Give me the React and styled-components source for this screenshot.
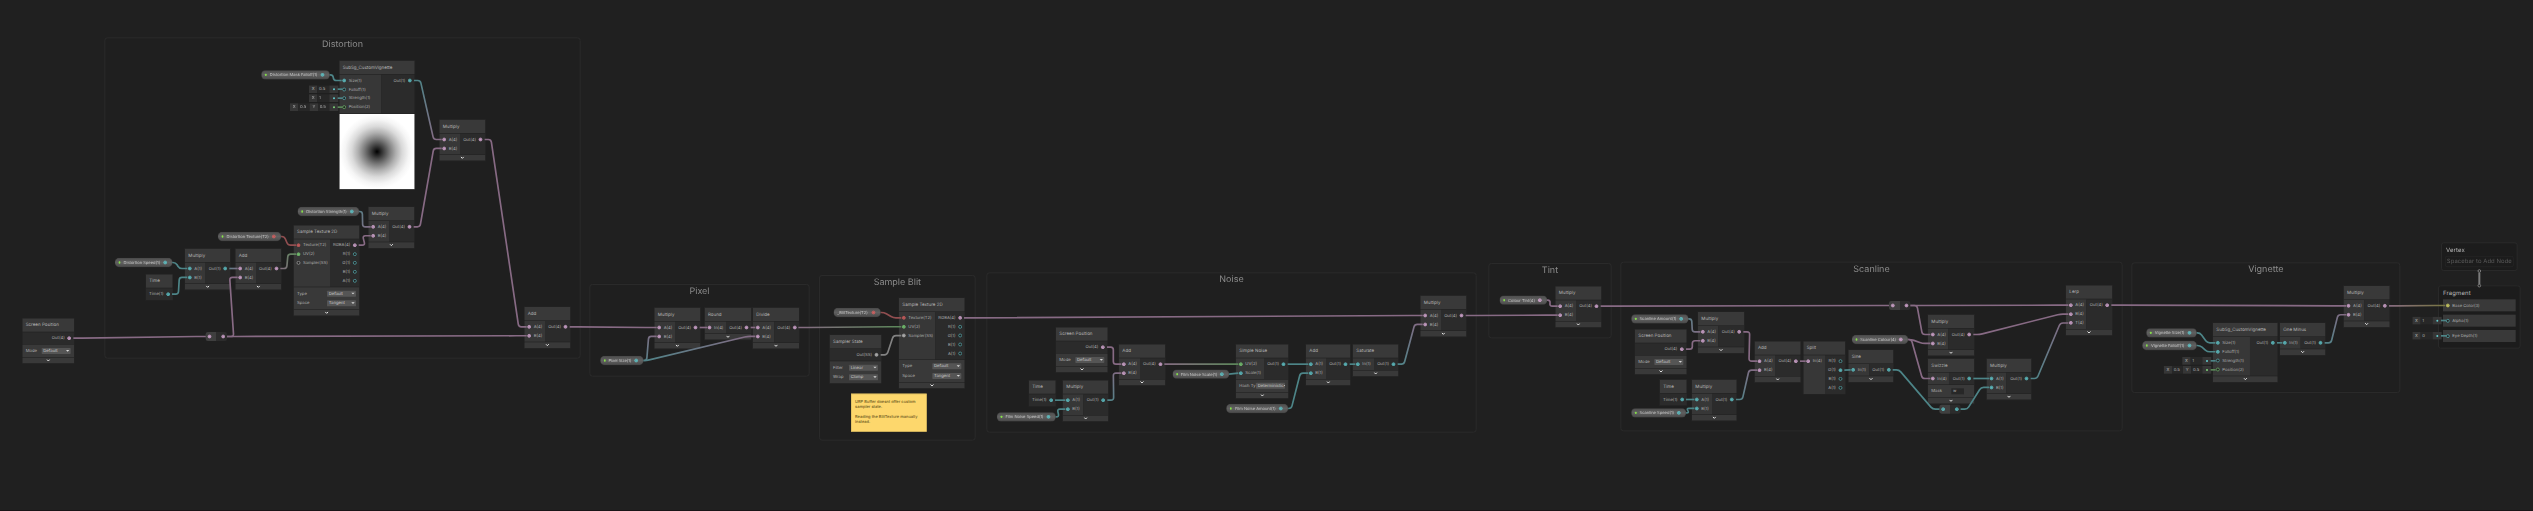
import React from 'react';
import styled, { createGlobalStyle, css } from 'styled-components';

const Global = createGlobalStyle`
  html, body, #root { margin: 0; padding: 0; height: 100%; }
  body {
    background: #202020;
    overflow: hidden;
    font-family: Inter, "Liberation Sans", sans-serif;
    text-rendering: geometricPrecision;
  }
  *, *::before, *::after { box-sizing: border-box; }
`;

const PORT = {
  teal: '#63cdd1',
  pink: '#e2b2e0',
  green: '#7fd67a',
  red: '#e06464',
  gray: '#c4c4c4',
  yellow: '#dede6a',
};
const WIRE = {
  teal: '#4d8588',
  pink: '#876a84',
  green: '#5a8858',
  red: '#914e50',
  gray: '#828282',
  yellow: '#77773f',
};

/* The graph is authored at 3x and shown zoomed out. */
const Viewport = styled.main`
  position: relative;
  width: 2533px;
  height: 511px;
  overflow: hidden;
  background: #202020;
  border-bottom: 1px solid #191416;
`;
const Canvas = styled.div`
  position: relative;
  width: 7599px;
  height: 1530px;
  transform: scale(0.333333);
  transform-origin: 0 0;
`;
const placed = css`
  position: absolute;
  left: ${(p) => p.$x}px;
  top: ${(p) => p.$y}px;
  width: ${(p) => p.$w}px;
`;

const GroupFrame = styled.section`
  ${placed}
  height: ${(p) => p.$h}px;
  border: 3px solid #2b2b2b;
  border-radius: 9px;
  background: #1f1f1f;
  padding-top: ${(p) => p.$pad}px;
  text-align: center;
`;
const GroupTitle = styled.h2`
  margin: 0;
  font-size: 27px;
  line-height: 32px;
  font-weight: 400;
  color: #8b8b8b;
`;

const NodeBox = styled.article`
  ${placed}
  display: flex;
  flex-direction: column;
  gap: 2px;
  background: #232323;
  outline: 2px solid #262626;
`;
const NodeHeader = styled.header`
  height: 40px;
  padding-left: 10px;
  display: flex;
  align-items: center;
  background: #393939;
  color: #b4b4b4;
  font-size: 13.5px;
  white-space: nowrap;
`;
const Ports = styled.div`
  display: flex;
`;
const Column = styled.div`
  display: flex;
  flex-direction: column;
  padding: 4px 9px 4.4px;
  ${(p) =>
    p.$side === 'in'
      ? css`width: ${p.$w}px; flex: none; background: #373737;`
      : css`flex: 1; align-items: flex-end; background: #2b2b2b;`}
`;
const PortRow = styled.div`
  height: 26.8px;
  display: flex;
  align-items: center;
  gap: 8px;
  white-space: nowrap;
  font-size: 12.6px;
  color: #b0b0b0;
`;
const Dot = styled.i`
  flex: none;
  width: 11px;
  height: 11px;
  border-radius: 50%;
  border: 2px solid ${(p) => PORT[p.$c]};
  opacity: 0.85;
  background: ${(p) => (p.$open ? '#1d1d1d' : PORT[p.$c])};
  box-shadow: ${(p) => (p.$open ? 'none' : 'inset 0 0 0 1px rgba(30,30,30,.35)')};
`;
const Controls = styled.div`
  background: #393939;
  padding: 4px 10px;
`;
const ControlRow = styled.div`
  height: 29px;
  display: flex;
  align-items: center;
  justify-content: space-between;
  white-space: nowrap;
  font-size: 12.6px;
  color: #b4b4b4;
`;
const Dropdown = styled.span`
  width: 87px;
  height: 18px;
  padding: 0 4px 0 5px;
  display: flex;
  align-items: center;
  justify-content: space-between;
  border-radius: 2px;
  background: #555555;
  color: #d0d0d0;
  overflow: hidden;
`;
const Caret = styled.i`
  flex: none;
  border: 5px solid transparent;
  border-top-color: #d8d8d8;
  border-bottom: 0;
`;
const MaskField = styled.span`
  width: 38px;
  height: 18px;
  margin-right: 20px;
  padding-left: 5px;
  line-height: 17px;
  background: #272727;
`;
const Footer = styled.footer`
  height: 17px;
  display: flex;
  align-items: center;
  justify-content: center;
  background: #393939;
`;
const Preview = styled.div`
  height: 226px;
  background: radial-gradient(circle, #000 0, #1c1c1c 8px, #434343 20px, #7b7b7b 38px, #b0b0b0 57px, #dadada 76px, #f5f5f5 96px, #fff 112px);
`;

const Pill = styled.div`
  ${placed}
  height: 29px;
  padding: 0 16px 0 11px;
  display: flex;
  align-items: center;
  justify-content: space-between;
  border-radius: 15px;
  border: 1px solid #3a3a3a;
  background: linear-gradient(#4d4d4d, #606060 50%, #494949);
  color: #c4c4c4;
  font-size: 12.2px;
  white-space: nowrap;
`;
const Exposed = styled.i`
  width: 5px;
  height: 7px;
  border-radius: 2px;
  background: #86e04a;
`;
const RedirectBox = styled.div`
  ${placed}
  height: 27px;
  padding: 0 6px;
  display: flex;
  align-items: center;
  justify-content: space-between;
  border-radius: 7px;
  background: linear-gradient(90deg, #3f3f3f 50%, #2c2c2c 50%);
`;

const InlineValue = styled.div`
  ${placed}
  height: 23px;
  display: flex;
  font-size: 12.6px;
  line-height: 23px;
  text-align: center;
  color: #b8b8b8;
`;
const AxisLabel = styled.span`
  width: 25px;
  background: #363636;
`;
const AxisValue = styled.span`
  flex: 1;
  padding-left: 5px;
  text-align: left;
  background: #272727;
`;
const Plug = styled.span`
  width: 27px;
  display: flex;
  align-items: center;
  justify-content: center;
  background: #363636;
  &::after {
    content: '';
    width: 6px;
    height: 6px;
    border-radius: 50%;
    background: ${(p) => PORT[p.$c]};
  }
`;

const Note = styled.aside`
  ${placed}
  height: 114px;
  padding: 15px 10px;
  background: #fdd76c;
  border: 2px solid #d9b95f;
  color: #6d5a22;
  font-size: 12px;
  font-weight: 500;
  line-height: 15px;
  white-space: pre;
`;

const Stack = styled.section`
  ${placed}
  height: ${(p) => p.$h}px;
  border: 3px solid #2a2a2a;
  border-radius: 8px;
  background: #1c1c1c;
  padding: 8px 12px;
  display: flex;
  flex-direction: column;
`;
const StackTitle = styled.h3`
  margin: 0;
  font-size: 18px;
  line-height: 23px;
  font-weight: 400;
  letter-spacing: 0.3px;
  color: #b8b8b8;
`;
const Hint = styled.div`
  width: 206px;
  height: 33px;
  margin: 7px 0 0 -3px;
  border: 2px solid #272727;
  border-radius: 6px;
  line-height: 28px;
  text-align: center;
  white-space: nowrap;
  font-size: 17.8px;
  letter-spacing: 0.2px;
  color: #5a5a5a;
`;
const Block = styled.div`
  width: 218px;
  height: 36px;
  margin-bottom: 10px;
  padding-left: 9px;
  display: flex;
  align-items: center;
  gap: 8px;
  background: #393939;
  font-size: 12.6px;
  color: #b4b4b4;
`;
const BlockList = styled.div`
  margin-top: 8px;
`;
const Wires = styled.svg`
  position: absolute;
  inset: 0;
  pointer-events: none;
`;

const p = (label, c, open) => ({ label, c, open });
const ab = (n, c) => [p(`A(${n})`, c), p(`B(${n})`, c)];
const out = (n, c) => [p(`Out(${n})`, c)];
const rgba = (names) => names.map((n) => p(`${n}(1)`, 'teal', true));
const math = (title, x, y, w, inW, n, c) => ({ title, x, y, w, inW, ins: ab(n, c), outs: out(n, c) });
const screenPos = (x, y) => ({
  title: 'Screen Position', x, y, w: 155, outs: out(4, 'pink'), controls: [['Mode', 'Default']],
});
const time = (x, y) => ({ title: 'Time', x, y, w: 80, outs: [p('Time(1)', 'teal')], flat: true });
const texture = (x, y) => ({
  title: 'Sample Texture 2D', x, y, w: 197, inW: 109,
  outs: [p('RGBA(4)', 'pink'), ...rgba(['R', 'G', 'B', 'A'])],
  controls: [['Type', 'Default'], ['Space', 'Tangent']],
});

const NODES = {
  pos1: screenPos(67, 955),
  time1: time(438, 823),
  mulA: math('Multiply', 555, 746, 135, 60, 1, 'teal'),
  addA: math('Add', 706, 746, 137, 62, 4, 'pink'),
  tex1: { ...texture(881, 676), ins: [p('Texture(T2)', 'red'), p('UV(2)', 'green'), p('Sampler(SS)', 'gray', true)] },
  mulB: math('Multiply', 1105, 621, 138, 62, 4, 'pink'),
  vigA: {
    title: 'SubSg_CustomVignette', x: 1018, y: 182, w: 226, inW: 126, preview: true, flat: true,
    ins: [p('Size(1)', 'teal'), p('Falloff(1)', 'teal', true), p('Strength(1)', 'teal', true), p('Position(2)', 'green', true)],
    outs: out(1, 'teal'),
  },
  mulC: math('Multiply', 1318, 359, 138, 62, 4, 'pink'),
  addB: math('Add', 1573, 921, 138, 62, 4, 'pink'),
  mulD: math('Multiply', 1963, 923, 138, 62, 4, 'pink'),
  round: { title: 'Round', x: 2114, y: 923, w: 140, inW: 64, ins: [p('In(4)', 'pink')], outs: out(4, 'pink') },
  divide: math('Divide', 2259, 923, 138, 64, 4, 'pink'),
  sampler: {
    title: 'Sampler State', x: 2489, y: 1005, w: 155, flat: true, outs: [p('Out(SS)', 'gray')],
    controls: [['Filter', 'Linear'], ['Wrap', 'Clamp']],
  },
  tex2: { ...texture(2697, 894), ins: [p('Texture(T2)', 'red'), p('UV(2)', 'green'), p('Sampler(SS)', 'gray')] },
  pos2: screenPos(3168, 982),
  time2: time(3087, 1141),
  mulE: math('Multiply', 3189, 1141, 135, 61, 1, 'teal'),
  addC: math('Add', 3357, 1033, 138, 63, 4, 'pink'),
  noise: {
    title: 'Simple Noise', x: 3708, y: 1033, w: 157, inW: 84,
    ins: [p('UV(2)', 'green'), p('Scale(1)', 'teal')], outs: out(1, 'teal'), controls: [['Hash Ty', 'Deterministic']],
  },
  addD: math('Add', 3918, 1033, 133, 60, 1, 'teal'),
  sat: { title: 'Saturate', x: 4059, y: 1033, w: 136, inW: 63, ins: [p('In(1)', 'teal')], outs: out(1, 'teal') },
  mulF: math('Multiply', 4261, 887, 138, 62, 4, 'pink'),
  mulG: math('Multiply', 4666, 859, 138, 62, 4, 'pink'),
  pos3: screenPos(4905, 988),
  time3: time(4980, 1139),
  mulH: math('Multiply', 5076, 1139, 134, 60, 1, 'teal'),
  mulI: math('Multiply', 5094, 936, 138, 61, 4, 'pink'),
  addE: math('Add', 5264, 1024, 138, 61, 4, 'pink'),
  split: {
    title: 'Split', x: 5410, y: 1024, w: 125, inW: 65, flat: true, ins: [p('In(4)', 'pink')],
    outs: [p('R(1)', 'teal', true), p('G(1)', 'teal'), p('B(1)', 'teal', true), p('A(1)', 'teal', true)],
  },
  sine: { title: 'Sine', x: 5545, y: 1050, w: 135, inW: 63, ins: [p('In(1)', 'teal')], outs: out(1, 'teal') },
  mulJ: math('Multiply', 5784, 944, 138, 61, 4, 'pink'),
  swizzle: {
    title: 'Swizzle', x: 5784, y: 1076, w: 138, inW: 63, ins: [p('In(4)', 'pink')], outs: out(1, 'teal'), mask: 'w',
  },
  mulK: math('Multiply', 5960, 1076, 134, 59, 1, 'teal'),
  lerp: {
    title: 'Lerp', x: 6198, y: 856, w: 138, inW: 61,
    ins: [p('A(4)', 'pink'), p('B(4)', 'pink'), p('T(4)', 'pink')], outs: out(4, 'pink'),
  },
  vigB: {
    title: 'SubSg_CustomVignette', x: 6639, y: 969, w: 194, inW: 111,
    ins: [p('Size(1)', 'teal'), p('Falloff(1)', 'teal'), p('Strength(1)', 'teal', true), p('Position(2)', 'green', true)],
    outs: out(1, 'teal'),
  },
  oneMinus: { title: 'One Minus', x: 6840, y: 969, w: 136, inW: 62, ins: [p('In(1)', 'teal')], outs: out(1, 'teal') },
  mulL: math('Multiply', 7031, 858, 138, 62, 4, 'pink'),
};

const PILLS = {
  maskFalloff: ['Distortion Mask Falloff(1)', 783, 210, 207, 'teal'],
  strength: ['Distortion Strength(1)', 892, 620, 186, 'teal'],
  distTex: ['Distortion Texture(T2)', 653, 695, 191, 'red'],
  distSpeed: ['Distortion Speed(1)', 344, 773, 174, 'teal'],
  pixel: ['Pixel Size(1)', 1800, 1067, 131, 'teal'],
  blit: ['_BlitTexture(T2)', 2500, 923, 143, 'red', true],
  filmSpeed: ['Film Noise Speed(1)', 2990, 1236, 178, 'teal'],
  filmScale: ['Film Noise Scale(1)', 3517, 1108, 171, 'teal'],
  filmAmount: ['Film Noise Amount(1)', 3678, 1211, 187, 'teal'],
  tint: ['Colour Tint(4)', 4498, 886, 144, 'pink'],
  scanAmount: ['Scanline Amount(1)', 4893, 942, 173, 'teal'],
  scanSpeed: ['Scanline Speed(1)', 4893, 1224, 166, 'teal'],
  scanColour: ['Scanline Colour(4)', 5555, 1004, 170, 'pink'],
  vigSize: ['Vignette Size(1)', 6438, 984, 153, 'teal'],
  vigFalloff: ['Vignette Falloff(1)', 6426, 1022, 165, 'teal'],
};

const REDIRECTS = {
  rA: [617, 996, 64, 'pink'],
  rB: [5667, 903, 64, 'pink'],
  rC: [5818, 1214, 64, 'teal'],
};

const GROUPS = [
  ['Distortion', 313, 112, 1429, 964, 0],
  ['Pixel', 1768, 852, 661, 278, 2],
  ['Sample Blit', 2457, 825, 470, 497, 1],
  ['Noise', 2959, 817, 1471, 481, 1],
  ['Tint', 4465, 789, 370, 226, 1],
  ['Scanline', 4861, 785, 1507, 509, 2],
  ['Vignette', 6394, 787, 807, 392, 1],
];

const VALUES = [
  [927, 256, 88, [['X', '0.5']], 'teal'],
  [927, 283, 88, [['X', '1']], 'teal'],
  [870, 310, 145, [['X', '0.5'], ['Y', '0.5']], 'green'],
  [6547, 1071, 87, [['X', '1']], 'teal'],
  [6491, 1098, 143, [['X', '0.5'], ['Y', '0.5']], 'green'],
  [7237, 950, 88, [['X', '1']], 'teal'],
  [7237, 996, 88, [['X', '0']], 'teal'],
];

const EDGES = [
  ['pos1', 'rA'], ['rA', 'addA:1'], ['rA', 'addB:1'], ['distSpeed', 'mulA:0'], ['time1', 'mulA:1'],
  ['mulA', 'addA:0'], ['addA', 'tex1:1'], ['distTex', 'tex1:0'], ['tex1', 'mulB:1'], ['strength', 'mulB:0'],
  ['mulB', 'mulC:1'], ['maskFalloff', 'vigA:0'], ['vigA', 'mulC:0'], ['mulC', 'addB:0'], ['addB', 'mulD:0'],
  ['pixel', 'mulD:1'], ['pixel', 'divide:1'], ['mulD', 'round:0'], ['round', 'divide:0'], ['divide', 'tex2:1'],
  ['blit', 'tex2:0'], ['sampler', 'tex2:2'], ['tex2', 'mulF:0'], ['pos2', 'addC:0'], ['time2', 'mulE:0'],
  ['filmSpeed', 'mulE:1'], ['mulE', 'addC:1'], ['addC', 'noise:0'], ['filmScale', 'noise:1'], ['noise', 'addD:0'],
  ['filmAmount', 'addD:1'], ['addD', 'sat:0'], ['sat', 'mulF:1'], ['mulF', 'mulG:1'], ['tint', 'mulG:0'],
  ['mulG', 'rB'], ['scanAmount', 'mulI:0'], ['pos3', 'mulI:1'], ['time3', 'mulH:0'], ['scanSpeed', 'mulH:1'],
  ['mulI', 'addE:0'], ['mulH', 'addE:1'], ['addE', 'split:0'], ['split:1', 'sine:0'], ['sine', 'rC'],
  ['rB', 'mulJ:0'], ['rB', 'lerp:0'], ['scanColour', 'mulJ:1'], ['scanColour', 'swizzle:0'], ['mulJ', 'lerp:1'],
  ['swizzle', 'mulK:0'], ['rC', 'mulK:1'], ['mulK', 'lerp:2'], ['lerp', 'mulL:0'], ['vigSize', 'vigB:0'],
  ['vigFalloff', 'vigB:1'], ['vigB', 'oneMinus:0'], ['oneMinus', 'mulL:1'], ['mulL', 'base'],
];

function anchor(ref, isOut) {
  const [id, idx] = ref.split(':');
  const i = Number(idx || 0);
  if (id === 'base') return { x: 7343, y: 916.5, c: 'yellow', trim: 8 };
  if (PILLS[id]) {
    const [, x, y, w, c] = PILLS[id];
    return { x: x + w - 22, y: y + 14.5, c, trim: 20 };
  }
  if (REDIRECTS[id]) {
    const [x, y, w, c] = REDIRECTS[id];
    return { x: isOut ? x + w - 11 : x + 11, y: y + 13.5, c, trim: 8 };
  }
  const n = NODES[id];
  const port = (isOut ? n.outs : n.ins)[i];
  return { x: isOut ? n.x + n.w - 14 : n.x + 14, y: n.y + 59.5 + 26.8 * i, c: port.c, trim: isOut ? 12 : 7 };
}

function wirePath(a, b) {
  const start = a.x + a.trim;
  const end = b.x - b.trim;
  if (b.x - a.x < 62 && Math.abs(b.y - a.y) < 4) return `M${start} ${a.y}L${end} ${b.y}`;
  const k1 = a.x + 31;
  const k2 = b.x - 31;
  const len = Math.hypot(k2 - k1, b.y - a.y) || 1;
  const r = Math.min(8, len / 2);
  const ux = ((k2 - k1) / len) * r;
  const uy = ((b.y - a.y) / len) * r;
  return `M${start} ${a.y}L${Math.max(start, k1 - r)} ${a.y}Q${k1} ${a.y} ${k1 + ux} ${a.y + uy}L${k2 - ux} ${b.y - uy}Q${k2} ${b.y} ${Math.min(end, k2 + r)} ${b.y}L${end} ${b.y}`;
}

function WireLayer() {
  const wires = EDGES.map(([from, to]) => [anchor(from, true), anchor(to, false)]);
  const stubs = VALUES.map(([x, y, w, , c]) => ({ x: x + w, y: y + 11.5, c }));
  return (
    <Wires width="7599" height="1530" fill="none">
      <defs>
        {wires.map(([a, b], i) => (
          <linearGradient key={i} id={`w${i}`} gradientUnits="userSpaceOnUse" x1={a.x} y1={a.y} x2={b.x} y2={b.y}>
            <stop offset="0" stopColor={WIRE[a.c]} />
            <stop offset="1" stopColor={WIRE[b.c]} />
          </linearGradient>
        ))}
      </defs>
      {wires.map(([a, b], i) => (
        <path key={i} d={wirePath(a, b)} stroke={`url(#w${i})`} strokeWidth="5" />
      ))}
      {stubs.map((s, i) => (
        <path key={i} d={`M${s.x - 2} ${s.y}H${s.x + 13}`} stroke={WIRE[s.c]} strokeWidth="5" />
      ))}
      <path d="M7438 818V853" stroke="#7c7c7c" strokeWidth="6" />
      <circle cx="7438" cy="813" r="4" stroke="#a0a0a0" strokeWidth="2" fill="#202020" />
      <circle cx="7438" cy="857" r="4" stroke="#a0a0a0" strokeWidth="2" fill="#202020" />
    </Wires>
  );
}

const Chevron = () => (
  <svg width="12" height="9" viewBox="0 0 12 9" fill="none" stroke="#f2f2f2" strokeWidth="2.8">
    <path d="M1.5 1.5L6 6L10.5 1.5" />
  </svg>
);

function GraphNode({ node }) {
  const { title, x, y, w, inW, ins, outs, controls, mask, preview, flat } = node;
  return (
    <NodeBox $x={x} $y={y} $w={w}>
      <NodeHeader>{title}</NodeHeader>
      <Ports>
        {ins && (
          <Column $side="in" $w={inW}>
            {ins.map((q) => (
              <PortRow key={q.label}><Dot $c={q.c} $open={q.open} />{q.label}</PortRow>
            ))}
          </Column>
        )}
        <Column $side="out">
          {outs.map((q) => (
            <PortRow key={q.label}>{q.label}<Dot $c={q.c} $open={q.open} /></PortRow>
          ))}
        </Column>
      </Ports>
      {controls && (
        <Controls>
          {controls.map(([label, value]) => (
            <ControlRow key={label}>
              {label}
              <Dropdown>{value}<Caret /></Dropdown>
            </ControlRow>
          ))}
        </Controls>
      )}
      {mask && <Controls><ControlRow>Mask<MaskField>{mask}</MaskField></ControlRow></Controls>}
      {preview && <Preview />}
      {!flat && <Footer><Chevron /></Footer>}
    </NodeBox>
  );
}

export default function App() {
  return (
    <>
      <Global />
      <Viewport>
        <Canvas>
          {GROUPS.map(([title, x, y, w, h, pad]) => (
            <GroupFrame key={title} $x={x} $y={y} $w={w} $h={h} $pad={pad}>
              <GroupTitle>{title}</GroupTitle>
            </GroupFrame>
          ))}
          <Stack $x={7323} $y={727} $w={230} $h={86}>
            <StackTitle>Vertex</StackTitle>
            <Hint>Spacebar to Add Node</Hint>
          </Stack>
          <Stack $x={7314} $y={856} $w={248} $h={190}>
            <StackTitle>Fragment</StackTitle>
            <BlockList>
              <Block><Dot $c="yellow" />Base Color(3)</Block>
              <Block><Dot $c="teal" $open />Alpha(1)</Block>
              <Block><Dot $c="teal" $open />Eye Depth(1)</Block>
            </BlockList>
          </Stack>
          {Object.entries(NODES).map(([id, node]) => <GraphNode key={id} node={node} />)}
          {VALUES.map(([x, y, w, axes, c]) => (
            <InlineValue key={`${x}-${y}`} $x={x} $y={y} $w={w}>
              {axes.map(([axis, value]) => (
                <React.Fragment key={axis}>
                  <AxisLabel>{axis}</AxisLabel>
                  <AxisValue>{value}</AxisValue>
                </React.Fragment>
              ))}
              <Plug $c={c} />
            </InlineValue>
          ))}
          <Note $x={2553} $y={1181} $w={227}>
            {'URP Buffer doesnt offer custom\nsampler state.\n\nReading the BlitTexture manually\ninstead.'}
          </Note>
          <WireLayer />
          {Object.entries(PILLS).map(([id, [label, x, y, w, c, hidden]]) => (
            <Pill key={id} $x={x} $y={y} $w={w}>
              {!hidden && <Exposed />}
              <span>{label}</span>
              <Dot $c={c} />
            </Pill>
          ))}
          {Object.entries(REDIRECTS).map(([id, [x, y, w, c]]) => (
            <RedirectBox key={id} $x={x} $y={y} $w={w}><Dot $c={c} /><Dot $c={c} /></RedirectBox>
          ))}
        </Canvas>
      </Viewport>
    </>
  );
}
